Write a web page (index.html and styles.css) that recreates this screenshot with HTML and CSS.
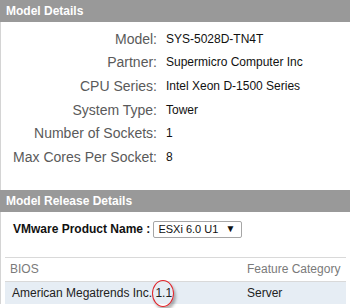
FILE: index.html
```html
<!DOCTYPE html>
<html>
<head>
<meta charset="utf-8">
<link rel="stylesheet" href="styles.css">
</head>
<body>
<div class="page">
  <section class="section">
    <div class="hd">Model Details</div>
    <div class="details">
      <div class="props">
        <div class="lbl">Model:</div><div class="val">SYS-5028D-TN4T</div>
        <div class="lbl">Partner:</div><div class="val">Supermicro Computer Inc</div>
        <div class="lbl">CPU Series:</div><div class="val">Intel Xeon D-1500 Series</div>
        <div class="lbl">System Type:</div><div class="val">Tower</div>
        <div class="lbl">Number of Sockets:</div><div class="val">1</div>
        <div class="lbl">Max Cores Per Socket:</div><div class="val">8</div>
      </div>
    </div>
  </section>
  <section class="section">
    <div class="hd">Model Release Details</div>
    <div class="release">
      <div class="product">
        <span class="plabel">VMware Product Name :</span>
        <div class="select"><span>ESXi 6.0 U1</span><span class="arrow">&#9660;</span></div>
      </div>
      <div class="table">
        <div class="trow thead">
          <div class="c1">BIOS</div>
          <div class="c2">Feature Category</div>
        </div>
        <div class="trow tdata">
          <div class="c1">American Megatrends Inc. <span class="ver">1.1<span class="ring"></span></span></div>
          <div class="c2">Server</div>
        </div>
      </div>
    </div>
  </section>
</div>
</body>
</html>
```

FILE: styles.css
```css
html, body {
  margin: 0;
  padding: 0;
  background: #fff;
}
body {
  font-family: "Liberation Sans", Arial, sans-serif;
  width: 350px;
  height: 308px;
  overflow: hidden;
}
.page {
  display: flex;
  flex-direction: column;
}
.hd {
  background: #999999;
  color: #fff;
  font-weight: bold;
  font-size: 12px;
  height: 22px;
  line-height: 22px;
  padding-left: 6px;
}
.details {
  border-left: 1px solid #d4d4d4;
  padding: 5px 0 21px 0;
}
.props {
  display: grid;
  grid-template-columns: 156px 1fr;
  column-gap: 9px;
  grid-auto-rows: 23.6px;
  align-items: center;
}
.lbl {
  text-align: right;
  color: #5a5a5a;
  font-size: 14px;
}
.val {
  color: #111;
  font-size: 12px;
}
.release {
  border-left: 1px solid #d4d4d4;
  padding: 9px 0 0 4px;
}
.product {
  display: flex;
  align-items: center;
  gap: 3px;
  padding-left: 8px;
  height: 17px;
}
.plabel {
  font-weight: bold;
  font-size: 12px;
  color: #111;
}
.select {
  box-sizing: border-box;
  width: 89px;
  height: 17px;
  border: 1px solid #a6a6a6;
  border-radius: 2px;
  display: flex;
  align-items: center;
  justify-content: space-between;
  padding: 0 6px 0 4px;
  font-size: 11px;
  color: #111;
}
.arrow {
  font-size: 10px;
  line-height: 1;
}
.table {
  margin-top: 19px;
  border-top: 1px solid #d9d9d9;
  margin-right: 4px;
}
.trow {
  display: flex;
  align-items: center;
  font-size: 12px;
  white-space: nowrap;
}
.thead {
  height: 23px;
  color: #7a7a7a;
  border-bottom: 1px solid #d9d9d9;
}
.tdata {
  height: 22px;
  background: #e6edf4;
  color: #222;
}
.c1 {
  box-sizing: border-box;
  width: 242px;
  padding-left: 5px;
}
.tdata .c1 {
  padding-left: 7px;
}
.c2 {
  flex: 1;
}
.ver {
  position: relative;
}
.ring {
  position: absolute;
  left: -3px;
  top: -6px;
  width: 20px;
  height: 25px;
  border: 1.5px solid #e0242a;
  border-radius: 50%;
  box-shadow: 2px 3px 3px rgba(0,0,0,0.3);
}
```
